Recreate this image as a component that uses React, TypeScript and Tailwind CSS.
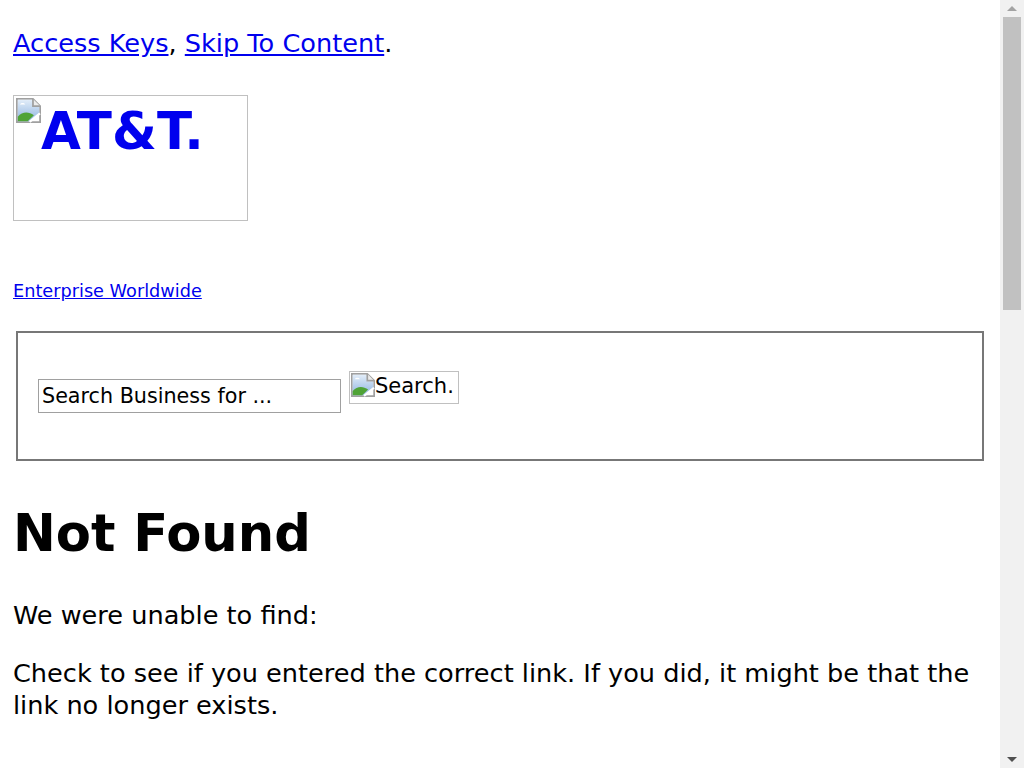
function BrokenImage({ size = 25 }: { size?: number }) {
  return (
    <svg width={size} height={size} viewBox="1 1 14 14" className="shrink-0">
      <defs>
        <linearGradient id="sky" x1="0" y1="0" x2="0" y2="1">
          <stop offset="0" stopColor="#e2edf9" />
          <stop offset="1" stopColor="#8fb4e0" />
        </linearGradient>
      </defs>
      <path d="M1.5 1.5H10.5L14.5 5.5V14.5H1.5Z" fill="#fff" stroke="#a0a0a0" />
      <path d="M2 2H10.2V5.8H14V10.2L8.8 14H2Z" fill="url(#sky)" />
      <path d="M3.2 4.6c0.8-1.1 2.2-1.1 3 0z" fill="#fff" />
      <path d="M2 11.5C4.5 8.5 8 8.5 11 10.6L7.5 14H2Z" fill="#4fa336" />
      <path d="M8.6 14.4L14.4 9.6" stroke="#fff" strokeWidth="1.3" />
      <path d="M10.5 1.5V5.5H14.5" fill="#ececec" stroke="#a0a0a0" />
    </svg>
  );
}

function Scrollbar() {
  return (
    <div className="w-[24px] shrink-0 bg-[#f1f1f1] flex flex-col items-center">
      <div className="h-[17px] flex items-center justify-center">
        <div className="w-0 h-0 border-l-[5px] border-r-[5px] border-b-[5px] border-l-transparent border-r-transparent border-b-[#a3a3a3]" />
      </div>
      <div className="w-[18px] h-[293px] bg-[#c1c1c1]" />
      <div className="flex-1" />
      <div className="h-[17px] flex items-center justify-center">
        <div className="w-0 h-0 border-l-[5px] border-r-[5px] border-t-[5px] border-l-transparent border-r-transparent border-t-[#505050]" />
      </div>
    </div>
  );
}

export default function App() {
  return (
    <div className="flex h-[768px] overflow-hidden bg-white text-black font-['DejaVu_Sans',sans-serif]">
      <main className="flex-1 min-w-0 px-[13px] pt-[29px]">
        <p className="text-[25.6px] leading-[29px]">
          <a href="#keys" className="text-[#0000ee] underline">Access Keys</a>,{' '}
          <a href="#content" className="text-[#0000ee] underline">Skip To Content</a>.
        </p>

        <a href="#home" className="mt-[37px] flex items-start w-[235px] h-[126px] border border-[#c0c0c0] p-[2px] text-[#0000ee] no-underline">
          <BrokenImage size={25} />
          <span className="font-bold text-[51.5px] leading-[60px] mt-[3px]">AT&amp;T.</span>
        </a>

        <a href="#enterprise" className="mt-[60px] block w-fit text-[17.7px] leading-[20px] text-[#0000ee] underline">
          Enterprise Worldwide
        </a>

        <div className="mt-[30px] mx-[3px] h-[130px] border-2 border-[#777777] pt-[38px] pl-[20px] flex items-start gap-[8px]">
          <input
            readOnly
            value="Search Business for ..."
            className="mt-[8px] w-[303px] h-[34px] border border-[#a0a0a0] px-[3px] text-[20.7px] text-black outline-none font-['DejaVu_Sans',sans-serif]"
          />
          <button className="w-[110px] h-[33px] border border-[#c0c0c0] px-[1px] pt-[1px] flex items-start text-[21px] leading-[24px] font-['DejaVu_Sans',sans-serif]">
            <BrokenImage size={24} />
            <span className="mt-[1px]">Search.</span>
          </button>
        </div>

        <h1 className="mt-[43px] text-[51.2px] leading-[58px] font-bold">Not Found</h1>

        <p className="mt-[37px] text-[25.6px] leading-[32px]">We were unable to find:</p>

        <p className="mt-[26px] text-[25.6px] leading-[32px]">
          Check to see if you entered the correct link. If you did, it might be that the link no longer exists.
        </p>
      </main>
      <Scrollbar />
    </div>
  );
}
